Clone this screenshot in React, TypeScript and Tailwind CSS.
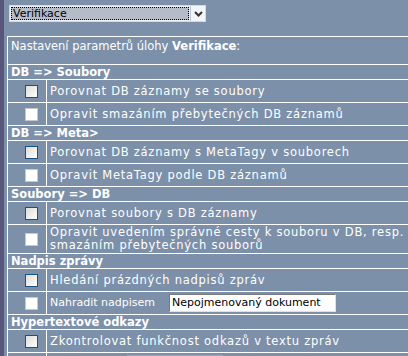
const font = "[font-family:'DejaVu_Sans',Verdana,sans-serif]";

type Item = { label: React.ReactNode; dark: boolean; wide?: boolean; extra?: React.ReactNode };

const sections: { title: string; items: Item[] }[] = [
  {
    title: "DB => Soubory",
    items: [
      { label: "Porovnat DB záznamy se soubory", dark: true, wide: true },
      { label: "Opravit smazáním přebytečných DB záznamů", dark: false, wide: true },
    ],
  },
  {
    title: "DB => Meta>",
    items: [
      { label: "Porovnat DB záznamy s MetaTagy v souborech", dark: true, wide: true },
      { label: "Opravit MetaTagy podle DB záznamů", dark: false, wide: true },
    ],
  },
  {
    title: "Soubory => DB",
    items: [
      { label: "Porovnat soubory s DB záznamy", dark: true, wide: true },
      {
        label: (
          <>
            Opravit uvedením správné cesty k souboru v DB, resp.
            <br />
            smazáním přebytečných souborů
          </>
        ),
        dark: false,
        wide: true,
      },
    ],
  },
  {
    title: "Nadpis zprávy",
    items: [
      { label: "Hledání prázdných nadpisů zpráv", dark: true, wide: true },
      {
        label: "Nahradit nadpisem",
        dark: false,
        extra: (
          <span className="ml-[14px] inline-block h-[18px] w-[167px] border border-t-[#7a7a7a] border-l-[#7a7a7a] border-r-[#e0e0e0] border-b-[#e0e0e0] bg-white px-[2px] align-middle leading-[16px] text-black">
            Nepojmenovaný dokument
          </span>
        ),
      },
    ],
  },
  {
    title: "Hypertextové odkazy",
    items: [
      { label: "Zkontrolovat funkčnost odkazů v textu zpráv", dark: true, wide: true },
      {
        label: "",
        dark: false,
        extra: <span className="ml-[77px] inline-block h-[18px] w-[96px] border border-[#9aa] bg-[#d4d8de] align-middle" />,
      },
    ],
  },
];

function Box({ dark }: { dark: boolean }) {
  return dark ? (
    <span className="block h-[13px] w-[13px] border border-[#1c5180] bg-gradient-to-br from-[#dcdcd7] to-white" />
  ) : (
    <span className="block h-[13px] w-[13px] border border-[#c9c9c0] bg-white" />
  );
}

export default function App() {
  return (
    <div className={`flex h-[356px] w-[408px] overflow-hidden bg-[#7c90a9] text-[11px] leading-[13px] text-white ${font}`}>
      <div className="w-[4px] shrink-0 bg-[#58567a]" />
      <div className="pl-[3px]">
        <div className="ml-[2px] mt-[5px] flex h-[17px] w-[197px] border border-[#d4dae2] bg-[#eef0f4]">
          <div className="m-[1px] flex flex-1 items-center border border-dotted border-black bg-[#b4bbc9] pl-[1px] text-black">
            Verifikace
          </div>
          <div className="flex w-[15px] items-center justify-center border-l border-[#c0c6d0] bg-[#f4f5f8]">
            <svg width="9" height="6" viewBox="0 0 9 6">
              <path d="M1 1 L4.5 4.5 L8 1" stroke="#333" strokeWidth="2" fill="none" />
            </svg>
          </div>
        </div>
        <table className="mt-[14px] w-[420px] border-separate border-spacing-[1px] bg-white">
          <tbody>
            <tr>
              <td colSpan={2} className="h-[27px] bg-[#7c90a9] px-[3px] pt-[3px] align-top text-[11.5px]">
                Nastavení parametrů úlohy <b>Verifikace</b>:
              </td>
            </tr>
            {sections.map((s) => (
              <SectionRows key={s.title} s={s} />
            ))}
          </tbody>
        </table>
      </div>
    </div>
  );
}

function SectionRows({ s }: { s: { title: string; items: Item[] } }) {
  return (
    <>
      <tr>
        <td colSpan={2} className="h-[14px] bg-[#7c90a9] px-[3px] text-[11.5px] font-bold">
          {s.title}
        </td>
      </tr>
      {s.items.map((it, i) => (
        <tr key={i}>
          <td className="h-[22px] w-[38px] bg-[#7c90a9] pl-[17px]">
            <Box dark={it.dark} />
          </td>
          <td className="bg-[#7c90a9] px-[3px] py-[1px]">
            <span className={it.wide ? "text-[11.5px] leading-[12px] tracking-[0.75px]" : ""}>{it.label}</span>
            {it.extra}
          </td>
        </tr>
      ))}
    </>
  );
}
